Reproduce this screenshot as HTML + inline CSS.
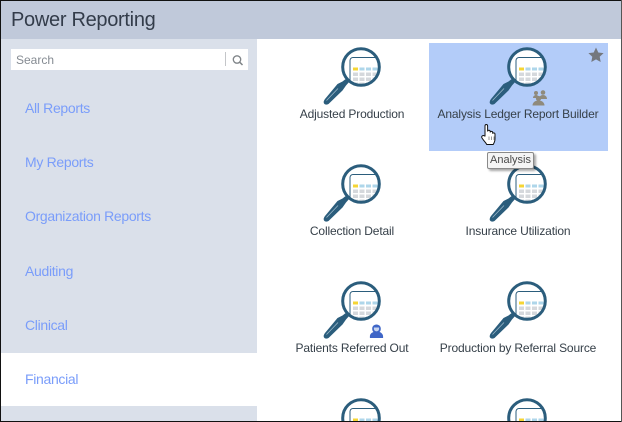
<!DOCTYPE html>
<html>
<head>
<meta charset="utf-8">
<style>
html,body{margin:0;padding:0;width:622px;height:422px;overflow:hidden;background:#fff;font-family:"Liberation Sans",Arial,sans-serif}
.a{position:absolute}
.nav{position:absolute;left:25px;font-size:14px;line-height:18px;color:#7a9dfa;letter-spacing:-.32px}
.lbl{position:absolute;width:180px;text-align:center;font-size:12px;line-height:16px;color:#364049;white-space:nowrap;letter-spacing:-.15px}
</style>
</head>
<body>
<div class="a" style="left:0;top:39px;width:257px;height:383px;background:#dae0ea"></div>
<div class="a" style="left:0;top:0;width:622px;height:39px;background:#c0c9da"></div>
<div class="a" style="left:0;top:353px;width:257px;height:53px;background:#fff"></div>
<div class="a" style="left:11px;top:8px;font-size:20px;line-height:24px;color:#333c4a;letter-spacing:-.3px">Power Reporting</div>
<div class="a" style="left:11px;top:49px;width:237px;height:21px;background:#fff"></div>
<div class="a" style="left:16px;top:52px;font-size:12px;line-height:16px;color:#858b92">Search</div>
<div class="a" style="left:225px;top:52px;width:1px;height:14px;background:#c4c6c9"></div>
<svg class="a" style="left:231px;top:54px" width="13" height="13" viewBox="0 0 13 13"><circle cx="6" cy="5.500" r="3.700" fill="none" stroke="#7f8488" stroke-width="1.300"/><path d="M8.700 8.200L11.500 11" stroke="#7f8488" stroke-width="1.500"/></svg>
<div class="nav" style="top:99px">All Reports</div>
<div class="nav" style="top:153px">My Reports</div>
<div class="nav" style="top:207px">Organization Reports</div>
<div class="nav" style="top:262px">Auditing</div>
<div class="nav" style="top:316px">Clinical</div>
<div class="nav" style="top:370px">Financial</div>
<div class="a" style="left:429px;top:43px;width:179px;height:108px;background:#b3ccf9"></div>
<svg class="a" style="left:0;top:0" width="622" height="422" viewBox="0 0 622 422">
<defs>
<clipPath id="c"><circle cx="0" cy="0" r="18"/></clipPath>
<g id="i">
<circle r="18" fill="#fff"/>
<g clip-path="url(#c)">
<rect x="-11" y="-9.500" width="40" height="40" rx="3" fill="#fff" stroke="#2b5d7c" stroke-width="1"/>
<rect x="-8" y="0.500" width="5" height="3" fill="#f5d535"/>
<rect x="-1.500" y="0.500" width="5" height="3" fill="#aed6ea"/>
<rect x="5" y="0.500" width="5" height="3" fill="#aed6ea"/>
<rect x="11.500" y="0.500" width="5" height="3" fill="#aed6ea"/>
<path d="M-8 5.500h5v3.500h-5zM-1.500 5.500h5v3.500h-5zM5 5.500h5v3.500h-5zM11.500 5.500h5v3.500h-5zM-8 10.500h5v3.500h-5zM-1.500 10.500h5v3.500h-5zM5 10.500h5v3.500h-5zM11.500 10.500h5v3.500h-5zM-8 15.500h5v3.500h-5zM-1.500 15.500h5v3.500h-5zM5 15.500h5v3.500h-5z" fill="#d5d8dc"/>
</g>
<circle r="18.300" fill="none" stroke="#2b5d7c" stroke-width="3"/>
<path d="M-14 11L-11 14L-15 18.500L-18.500 23.500L-32.500 37Q-35.500 38.500-37 36.500Q-38 34.500-36 32L-23.500 17L-18.500 14.500Z" fill="#2b5d7c"/>
<path d="M-34.500 33.500L-23 21.500" stroke="#9dbacb" stroke-width=".8"/>
</g>
</defs>
<use href="#i" x="361" y="67"/>
<use href="#i" x="527" y="67"/>
<use href="#i" x="361" y="184"/>
<use href="#i" x="527" y="184"/>
<use href="#i" x="361" y="301"/>
<use href="#i" x="527" y="301"/>
<use href="#i" x="361" y="418"/>
<use href="#i" x="527" y="418"/>
<path d="M596 47.500l2.300 5 5.300.6-3.900 3.600 1 5.300-4.700-2.600-4.700 2.600 1-5.300-3.900-3.600 5.300-.6z" fill="#74787e"/>
<g fill="#8f8a7c">
<circle cx="543" cy="92.500" r="2.300"/><path d="M539 99c0-2.500 1.800-4 4-4s4 1.500 4 4z"/>
<circle cx="536" cy="93" r="2"/><path d="M533 98c0-1.800 1.400-3 3-3s3 1.200 3 3z"/>
<circle cx="538.500" cy="98.500" r="2.600"/>
<path d="M532.500 105.500c0-3 2.600-5 6-5s6 2 6 5z"/>
</g>
<g transform="translate(0,3)">
<path d="M373.500 329c-.9-.7-1.300-2-1.300-3.400 0-2.300 1.800-4.100 4.300-4.100s4.300 1.800 4.300 4.100c0 1.400-.4 2.700-1.300 3.400 2.200.8 3.600 2.200 3.600 4.600v1.400h-13.200v-1.400c0-2.400 1.400-3.800 3.600-4.600z" fill="#3f66c7"/>
<path d="M373.900 324.500h5.200v1.300c0 1.400-1.100 2.600-2.600 2.600s-2.600-1.200-2.600-2.600z" fill="#c8d5ef"/>
</g>
<g transform="translate(-1,-2)">
<path d="M486 138v-10c0-2 2.600-2 2.600 0v5.500c0-1.700 2.600-1.700 2.600 0v1c0-1.500 2.500-1.500 2.500.2v1c0-1.200 2.300-1.200 2.300.6v4.700c0 2.500-.8 3.800-1.800 5.500h-6.400c-1-2-3.900-4.700-4.900-6.700-.8-1.600 1-3 2.600-1.800z" fill="#fff" stroke="#111" stroke-width="1"/>
<path d="M490 138.500v3.500M492.500 138.500v3.500M495 138.500v3.500" stroke="#555" stroke-width=".6"/>
</g>
</svg>
<div class="lbl" style="left:262px;top:106px">Adjusted Production</div>
<div class="lbl" style="left:428px;top:106px">Analysis Ledger Report Builder</div>
<div class="lbl" style="left:262px;top:223px">Collection Detail</div>
<div class="lbl" style="left:428px;top:223px">Insurance Utilization</div>
<div class="lbl" style="left:262px;top:340px">Patients Referred Out</div>
<div class="lbl" style="left:428px;top:340px">Production by Referral Source</div>
<div class="a" style="left:487px;top:152px;width:47px;height:17px;box-sizing:border-box;background:#f4f4f4;border:1px solid #8a8a8a;border-radius:2px;box-shadow:2px 2px 2px rgba(0,0,0,.35);font-size:11px;line-height:15px;color:#4a4a4a;text-align:center">Analysis</div>
<div class="a" style="left:0;top:0;width:1px;height:422px;background:#111"></div>
<div class="a" style="left:0;top:0;width:622px;height:1px;background:#111"></div>
<div class="a" style="left:0;top:421px;width:622px;height:1px;background:#111"></div>
<div class="a" style="left:621px;top:0;width:1px;height:422px;background:#555"></div>
</body>
</html>
